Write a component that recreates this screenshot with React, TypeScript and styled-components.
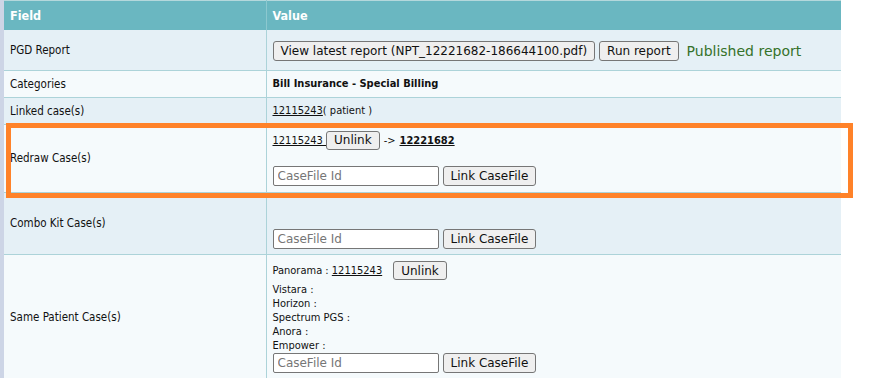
import React, { FC } from "react";
import styled, { createGlobalStyle } from "styled-components";

const condensed = `"DejaVu Sans Condensed", "DejaVu Sans", Verdana, sans-serif`;
const regular = `"DejaVu Sans", Verdana, sans-serif`;

const GlobalStyle = createGlobalStyle`
  html, body {
    margin: 0;
    padding: 0;
    background: #fff;
    font-family: ${condensed};
    color: #111;
  }
`;

const otherLabs = ["Vistara", "Horizon", "Spectrum PGS", "Anora", "Empower"];

const App: FC = () => {
  return (
    <Page>
      <GlobalStyle />
      <DetailTable>
        <colgroup>
          <col style={{ width: 262 }} />
          <col />
        </colgroup>
        <thead>
          <tr>
            <HeadCell>Field</HeadCell>
            <HeadCell>Value</HeadCell>
          </tr>
        </thead>
        <tbody>
          <Row $alt $height={40}>
            <LabelCell>PGD Report</LabelCell>
            <ValueCell $pad="3px 6px 0">
              <Inline $gap={4}>
                <Button>View latest report (NPT_12221682-186644100.pdf)</Button>
                <Button>Run report</Button>
                <Published>Published report</Published>
              </Inline>
            </ValueCell>
          </Row>
          <Row $height={27}>
            <LabelCell>Categories</LabelCell>
            <ValueCell>
              <Strong>Bill Insurance - Special Billing</Strong>
            </ValueCell>
          </Row>
          <Row $alt $height={27}>
            <LabelCell>Linked case(s)</LabelCell>
            <ValueCell>
              <CaseLink href="#">12115243</CaseLink>( patient )
            </ValueCell>
          </Row>
          <Row $height={68}>
            <LabelCell>Redraw Case(s)</LabelCell>
            <ValueCell $top>
              <Inline $gap={0}>
                <CaseLink href="#">12115243 </CaseLink>
                <Button $small>Unlink</Button>
                <Arrow>-&gt;</Arrow>
                <CaseLink href="#" $bold>
                  12221682
                </CaseLink>
              </Inline>
              <LinkForm $gap={16}>
                <CaseInput placeholder="CaseFile Id" />
                <Button>Link CaseFile</Button>
              </LinkForm>
            </ValueCell>
          </Row>
          <Row $alt $height={62}>
            <LabelCell>Combo Kit Case(s)</LabelCell>
            <ValueCell $top>
              <LinkForm $gap={30}>
                <CaseInput placeholder="CaseFile Id" />
                <Button>Link CaseFile</Button>
              </LinkForm>
            </ValueCell>
          </Row>
          <Row $height={126}>
            <LabelCell>Same Patient Case(s)</LabelCell>
            <ValueCell $top>
              <FirstLabLine>
                Panorama : <CaseLink href="#">12115243</CaseLink>
                <Button $small $spaced>
                  Unlink
                </Button>
              </FirstLabLine>
              {otherLabs.map((lab) => (
                <LabLine key={lab}>{lab} :</LabLine>
              ))}
              <LinkForm $gap={0}>
                <CaseInput placeholder="CaseFile Id" />
                <Button>Link CaseFile</Button>
              </LinkForm>
            </ValueCell>
          </Row>
        </tbody>
      </DetailTable>
      <Highlight />
    </Page>
  );
};

export default App;

const Page = styled.div`
  position: relative;
  width: 885px;
  height: 378px;
  overflow: hidden;
  box-sizing: border-box;
  padding-left: 4px;
  background: linear-gradient(to right, #cdd5e6 4px, #fff 4px);
`;

const DetailTable = styled.table`
  width: 837px;
  border-collapse: collapse;
  table-layout: fixed;
  border-top: 1px solid #b4d8dc;
  font-size: 11px;
`;

const HeadCell = styled.th`
  height: 29px;
  padding: 0 6px;
  background: #6ab7c1;
  color: #fff;
  font-weight: bold;
  font-size: 12.5px;
  text-align: left;
  border-right: 1px solid #8cc8cf;
  &:last-child {
    border-right: none;
  }
`;

const Row = styled.tr<{ $alt?: boolean; $height: number }>`
  height: ${(p) => p.$height}px;
  background: ${(p) => (p.$alt ? "#e5f0f6" : "#f5fafc")};
  border-bottom: 1px solid #acd3d9;
`;

const LabelCell = styled.td`
  padding: 0 6px;
  font-size: 11.5px;
  vertical-align: middle;
  border-right: 1px solid #acd3d9;
`;

const ValueCell = styled.td<{ $top?: boolean; $pad?: string }>`
  padding: ${(p) => p.$pad ?? (p.$top ? "6px 6px 0" : "0 6px")};
  vertical-align: ${(p) => (p.$top ? "top" : "middle")};
`;

const Inline = styled.div<{ $gap: number }>`
  display: flex;
  align-items: center;
  gap: ${(p) => p.$gap}px;
`;

const Button = styled.button<{ $small?: boolean; $spaced?: boolean }>`
  font-family: ${regular};
  font-size: 12px;
  color: #111;
  height: ${(p) => (p.$small ? 19 : 20)}px;
  padding: 0 7px;
  margin-left: ${(p) => (p.$spaced ? 11 : 0)}px;
  background: #efefef;
  border: 1px solid #767676;
  border-radius: 3px;
  line-height: 1;
  vertical-align: middle;
`;

const Published = styled.span`
  margin-left: 4px;
  font-family: ${regular};
  font-size: 14px;
  color: #35722a;
`;

const Strong = styled.span`
  font-weight: bold;
`;

const CaseLink = styled.a<{ $bold?: boolean }>`
  color: #111;
  text-decoration: underline;
  font-weight: ${(p) => (p.$bold ? "bold" : "normal")};
  white-space: pre;
`;

const Arrow = styled.span`
  margin: 0 4px;
`;

const LinkForm = styled.div<{ $gap: number }>`
  display: flex;
  align-items: center;
  gap: 4px;
  margin-top: ${(p) => p.$gap}px;
`;

const CaseInput = styled.input`
  box-sizing: border-box;
  width: 166px;
  height: 20px;
  padding: 0 4px;
  font-family: ${regular};
  font-size: 12px;
  border: 1px solid #767676;
  border-radius: 2px;
  background: #fff;
  &::placeholder {
    color: #767676;
  }
`;

const LabLine = styled.div`
  height: 14px;
  line-height: 14px;
`;

const FirstLabLine = styled.div`
  height: 20px;
  line-height: 20px;
  margin-bottom: 2px;
  white-space: nowrap;
`;

const Highlight = styled.div`
  position: absolute;
  left: 6px;
  top: 123px;
  width: 847px;
  height: 75px;
  box-sizing: border-box;
  border: 5px solid #ff8229;
  pointer-events: none;
`;
